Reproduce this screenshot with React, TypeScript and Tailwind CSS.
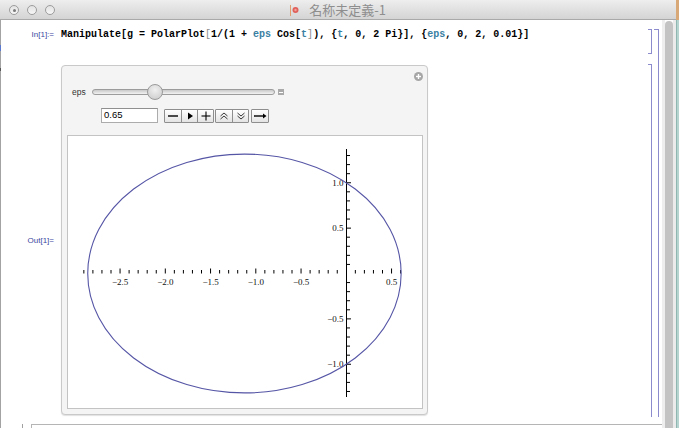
import React from "react";

const X0 = 346.3;
const SX = 90.5;
const Y0 = 273.5;
const SY = 90.75;
const CURVE = "#5555a6";

function Plot() {
  const xt: React.ReactNode[] = [];
  for (let k = -29; k <= 6; k++) {
    if (k === 0) continue;
    const x = X0 + k * 0.1 * SX;
    const major = k % 5 === 0;
    xt.push(
      <line key={"x" + k} x1={x} x2={x} y1={major ? 268.5 : 270} y2={273.5} stroke="#000" strokeWidth={1} />
    );
  }
  const yt: React.ReactNode[] = [];
  for (let k = -13; k <= 13; k++) {
    if (k === 0) continue;
    const y = Y0 - k * 0.1 * SY;
    const major = k % 5 === 0;
    yt.push(
      <line key={"y" + k} x1={346.5} x2={major ? 351 : 350} y1={y} y2={y} stroke="#000" strokeWidth={1} />
    );
  }
  const xl = [-2.5, -2.0, -1.5, -1.0, -0.5, 0.5];
  const yl = [1.0, 0.5, -0.5, -1.0];
  const fmt = (v: number) => (v < 0 ? "\u2212" : "") + Math.abs(v).toFixed(1);
  const a = 1.7316;
  const b = 1.3159;
  const c = -1.12554;
  return (
    <svg width={354} height={272} viewBox="68 136 354 272" className="block">
      {xt}
      {yt}
      <line x1={346.5} x2={346.5} y1={149} y2={397} stroke="#000" strokeWidth={1} />
      {xl.map((v) => (
        <text
          key={"xl" + v}
          x={X0 + v * SX}
          y={284.5}
          textAnchor="middle"
          fontFamily="'Liberation Serif', serif"
          fontSize={9}
          fill="#111"
        >
          {fmt(v)}
        </text>
      ))}
      {yl.map((v) => (
        <text
          key={"yl" + v}
          x={343.5}
          y={Y0 - v * SY + 3}
          textAnchor="end"
          fontFamily="'Liberation Serif', serif"
          fontSize={9}
          fill="#111"
        >
          {fmt(v)}
        </text>
      ))}
      <ellipse
        cx={X0 + c * SX}
        cy={Y0}
        rx={a * SX}
        ry={b * SY}
        fill="none"
        stroke={CURVE}
        strokeWidth={1.1}
      />
    </svg>
  );
}

function Btn({ children, first }: { children: React.ReactNode; first?: boolean }) {
  return (
    <div
      className={
        "w-[16px] h-full flex items-center justify-center bg-gradient-to-b from-[#ffffff] to-[#e4e4e4] " +
        (first ? "" : "border-l border-[#8e8e8e]")
      }
    >
      {children}
    </div>
  );
}

function ManipulatePanel() {
  const value = 0.65;
  const trackW = 183;
  const thumb = 16;
  const left = (value / 2) * (trackW - thumb);
  return (
    <div className="relative w-[367px] h-[350px] flex flex-col rounded-[4px] border border-[#c9c9c9] bg-[#f4f4f4] shadow-[0_1px_1px_rgba(0,0,0,0.12)]">
      <div className="absolute right-[4px] top-[6px] w-[9px] h-[9px] rounded-full bg-[#a6a6a6] flex items-center justify-center">
        <svg width="9" height="9" viewBox="0 0 9 9">
          <line x1="2" x2="7" y1="4.5" y2="4.5" stroke="#fff" strokeWidth="1.4" />
          <line x1="4.5" x2="4.5" y1="2" y2="7" stroke="#fff" strokeWidth="1.4" />
        </svg>
      </div>

      <div className="mt-[18px] h-[16px] flex items-center pl-[10px]">
        <div className="w-[20px] text-[8.5px] leading-[10px] text-[#333] font-['Liberation_Sans',sans-serif]">eps</div>
        <div className="relative w-[183px] h-[6px] rounded-full border border-[#9c9c9c] bg-gradient-to-b from-[#c9c9c9] to-[#f2f2f2]">
          <div
            className="absolute top-[-6px] w-[16px] h-[16px] rounded-full border border-[#9a9a9a] bg-[radial-gradient(circle_at_50%_35%,#f0f0f0,#c8c8c8)]"
            style={{ left: left }}
          />
        </div>
        <div className="ml-[3px] w-[6px] h-[6px] bg-[#a9a9a9] flex items-center justify-center">
          <div className="w-[4px] h-px bg-white" />
        </div>
      </div>

      <div className="mt-[8px] h-[15px] flex items-center">
        <div className="ml-[39px] w-[57px] h-[15px] bg-white border border-[#acacac] border-t-[#8f8f8f] flex items-center pl-[2px] text-[9.5px] text-black font-['Liberation_Sans',sans-serif]">
          0.65
        </div>
        <div className="ml-[6px] flex h-[14px] border border-[#8e8e8e] rounded-[1px] overflow-hidden">
          <Btn first>
            <svg width="12" height="12" viewBox="0 0 12 12">
              <line x1="1" x2="11" y1="6" y2="6" stroke="#000" strokeWidth="1.4" />
            </svg>
          </Btn>
          <Btn>
            <svg width="12" height="12" viewBox="0 0 12 12">
              <polygon points="4,2.5 4,9.5 9,6" fill="#000" />
            </svg>
          </Btn>
          <Btn>
            <svg width="12" height="12" viewBox="0 0 12 12">
              <line x1="1.5" x2="10.5" y1="6" y2="6" stroke="#000" strokeWidth="1.1" />
              <line x1="6" x2="6" y1="1.5" y2="10.5" stroke="#000" strokeWidth="1.1" />
            </svg>
          </Btn>
        </div>
        <div className="ml-[1px] flex h-[14px] border border-[#8e8e8e] rounded-[1px] overflow-hidden">
          <Btn first>
            <svg width="12" height="12" viewBox="0 0 12 12">
              <polyline points="2.5,6 6,3 9.5,6" fill="none" stroke="#222" strokeWidth="0.9" />
              <polyline points="2.5,9 6,6 9.5,9" fill="none" stroke="#222" strokeWidth="0.9" />
            </svg>
          </Btn>
          <Btn>
            <svg width="12" height="12" viewBox="0 0 12 12">
              <polyline points="2.5,3 6,6 9.5,3" fill="none" stroke="#222" strokeWidth="0.9" />
              <polyline points="2.5,6 6,9 9.5,6" fill="none" stroke="#222" strokeWidth="0.9" />
            </svg>
          </Btn>
        </div>
        <div className="ml-[2px] flex h-[14px] border border-[#8e8e8e] rounded-[1px] overflow-hidden">
          <Btn first>
            <svg width="14" height="12" viewBox="0 0 14 12">
              <line x1="1" x2="11" y1="6" y2="6" stroke="#000" strokeWidth="1.4" />
              <polygon points="10,3.5 13.5,6 10,8.5" fill="#000" />
            </svg>
          </Btn>
        </div>
      </div>

      <div className="mt-[12px] ml-[5px] w-[356px] h-[274px] border border-[#c3c3c3] bg-white">
        <Plot />
      </div>
    </div>
  );
}

export default function App() {
  const label = "text-[8px] leading-[12px] text-[#3b46a0] font-['Liberation_Sans',sans-serif] text-right";
  const teal = "text-[#3a80a2]";
  return (
    <div className="w-[679px] h-[428px] flex overflow-hidden bg-white">
      <div className="w-[676px] flex flex-col">
        <div className="h-[20px] grid grid-cols-[1fr_auto_1fr] items-center border-b border-[#a9a9a9] bg-gradient-to-b from-[#eeeeee] to-[#d4d4d4]">
          <div className="flex items-center gap-[8px] pl-[9px] pt-[1px]">
            <div className="w-[10px] h-[10px] rounded-full border border-[#9c9c9c] bg-gradient-to-b from-[#e2e2e2] to-[#f7f7f7] flex items-center justify-center">
              <div className="w-[3px] h-[3px] rounded-full bg-[#7b7b7b]" />
            </div>
            <div className="w-[10px] h-[10px] rounded-full border border-[#9c9c9c] bg-gradient-to-b from-[#e2e2e2] to-[#f7f7f7]" />
            <div className="w-[10px] h-[10px] rounded-full border border-[#9c9c9c] bg-gradient-to-b from-[#e2e2e2] to-[#f7f7f7]" />
          </div>
          <div className="flex items-center">
            <svg width="10" height="14" viewBox="0 0 10 14">
              <line x1="0.5" x2="0.5" y1="2" y2="13" stroke="#e0a070" strokeWidth="1" />
              <circle cx="5.5" cy="7" r="3" fill="#e0605a" />
              <circle cx="5.5" cy="7" r="1.2" fill="#f2a09a" />
            </svg>
            <span className="ml-[9px] text-[13px] leading-[16px] text-[#8e8e8e] font-['Noto_Sans_CJK_JP',sans-serif]">
              名称未定義-1
            </span>
          </div>
          <div />
        </div>

        <div className="flex-1 flex">
          <div className="w-px flex flex-col bg-[#a3a3a3]">
            <div className="mt-[25px] h-[6px] bg-[#5a78cc]" />
            <div className="mt-[17px] h-[3px] bg-[#555]" />
          </div>

          <div className="w-[661px] flex flex-col">
            <div className="flex pt-[9px]">
              <div className="w-[652px] flex flex-col">
                <div className="flex h-[25px]">
                  <div className={"w-[53px] " + label}>In[1]:=</div>
                  <div className="ml-[7px] flex-1 whitespace-pre text-[10px] leading-[12px] font-bold text-black font-['Liberation_Mono',monospace]">
                    <span>Manipulate[g = PolarPlot</span>
                    <span className="text-[#8a8a8a] font-normal">[</span>
                    <span>1/(1 + </span>
                    <span className={teal}>eps</span>
                    <span> Cos[</span>
                    <span className={teal}>t</span>
                    <span className="text-[#8a8a8a] font-normal">]</span>
                    <span>), {"{"}</span>
                    <span className={teal}>t</span>
                    <span>, 0, 2 Pi{"}"}], {"{"}</span>
                    <span className={teal}>eps</span>
                    <span>, 0, 2, 0.01{"}"}]</span>
                  </div>
                  <div className="w-[4px] border-t border-b border-r border-[#8b8bcd]" />
                  <div className="w-px" />
                </div>
                <div className="h-[10px]" />
                <div className="flex h-[353px]">
                  <div className={"w-[53px] self-center " + label}>Out[1]=</div>
                  <div className="ml-[7px] mt-[1px]">
                    <ManipulatePanel />
                  </div>
                  <div className="flex-1" />
                  <div className="w-[4px] border-t border-r border-[#8b8bcd]" />
                  <div className="w-px" />
                </div>
              </div>
              <div className="w-px" />
              <div className="w-[5px] h-[388px] border-t border-r border-[#8b8bcd]" />
            </div>
            <div className="flex-1 flex pt-[7px]">
              <div className="ml-[21px] w-px bg-[#a0a0a0]" />
              <div className="ml-[8px] flex-1 border-t border-l border-[#b5b5b5]" />
            </div>
          </div>

          <div className="w-[3px] bg-[#eeeeee]" />
          <div className="w-[8px] mt-[1px] rounded-t-full bg-[#c3c3c3]" />
          <div className="w-[3px] bg-[#ebebeb]" />
        </div>
      </div>
      <div className="w-[3px] flex flex-col">
        <div className="h-[20px] bg-[#d9a877]" />
        <div className="flex-1 bg-[#b5d4cf] border-l border-[#8fb6b0]" />
      </div>
    </div>
  );
}
